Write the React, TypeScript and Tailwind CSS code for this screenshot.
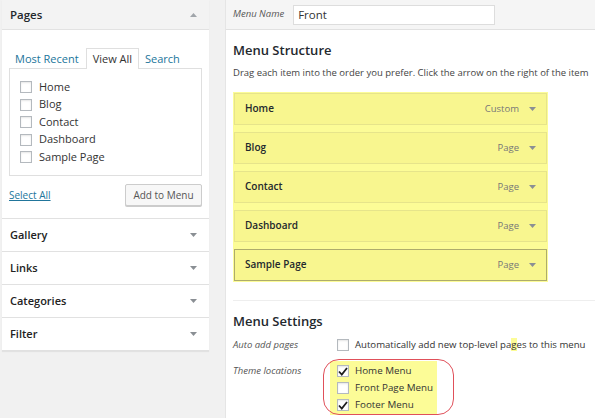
import React from "react";

const font = { fontFamily: '"Open Sans", "Liberation Sans", sans-serif' };

function Tri({ up = false, cls = "" }: { up?: boolean; cls?: string }) {
  return (
    <svg width="7" height="4" viewBox="0 0 7 4" className={cls}>
      {up ? <path d="M0 4 L3.5 0 L7 4 Z" fill="#a0a5aa" /> : <path d="M0 0 L7 0 L3.5 4 Z" fill="#8a8f94" />}
    </svg>
  );
}

function Box({ checked = false }: { checked?: boolean }) {
  return (
    <div className="w-[12px] h-[12px] border border-[#b4b9be] bg-white shadow-[inset_0_1px_2px_rgba(0,0,0,0.1)] flex items-center justify-center shrink-0">
      {checked && (
        <svg width="10" height="9" viewBox="0 0 10 9">
          <path d="M1 4.5 L3.8 7.5 L9 1" stroke="#1e1e1e" strokeWidth="1.8" fill="none" />
        </svg>
      )}
    </div>
  );
}

function Section({ label }: { label: string }) {
  return (
    <div className="h-[33px] border-b border-[#e1e1e1] flex items-center justify-between pl-[8px] pr-[12px]">
      <span className="text-[11px] font-semibold text-[#222]">{label}</span>
      <Tri />
    </div>
  );
}

function Item({ label, type, dark = false }: { label: string; type: string; dark?: boolean }) {
  return (
    <div className={`h-[32px] border ${dark ? "border-[#aeac6c]" : "border-[#e6e48b]"} bg-[#f8f68f] flex items-center justify-between pl-[10px] pr-[10px]`}>
      <span className="text-[10px] font-semibold text-[#23282d]">{label}</span>
      <div className="flex items-center gap-[10px]">
        <span className="text-[9.5px] text-[#777]">{type}</span>
        <Tri />
      </div>
    </div>
  );
}

export default function App() {
  const pages = ["Home", "Blog", "Contact", "Dashboard", "Sample Page"];
  return (
    <div style={font} className="w-[595px] h-[418px] bg-[#f1f1f1] flex overflow-hidden text-[#333]">
      {/* Left column */}
      <div className="ml-[2px] w-[207px] shrink-0 self-start bg-white shadow-[0_1px_1px_rgba(0,0,0,0.06)]">
        <div className="h-[30px] bg-[#f3f3f3] border-b border-[#e2e2e2] flex items-center justify-between pl-[8px] pr-[12px]">
          <span className="text-[11.5px] font-semibold text-[#23282d]">Pages</span>
          <Tri up />
        </div>
        <div className="pt-[18px] px-[7px] pb-[12px] border-b border-[#e1e1e1]">
          <div className="flex items-end text-[11px] h-[20px]">
            <span className="ml-[6px] text-[#21759b] mb-[1px]">Most Recent</span>
            <span className="ml-[7px] px-[6px] h-[21px] flex items-center border border-b-0 border-[#dfdfdf] bg-white relative top-[1px] text-[#333]">View All</span>
            <span className="ml-[6px] text-[#21759b] mb-[1px]">Search</span>
          </div>
          <div className="h-[108px] border border-[#dfdfdf] bg-white pt-[12px] pl-[10px] flex flex-col gap-[5.5px]">
            {pages.map((p) => (
              <div key={p} className="flex items-center gap-[7px] h-[12px]">
                <Box />
                <span className="text-[11px] text-[#333]">{p}</span>
              </div>
            ))}
          </div>
          <div className="flex items-center justify-between mt-[8px]">
            <span className="text-[10px] text-[#21759b] underline">Select All</span>
            <div className="w-[77px] h-[22px] border border-[#ccc] rounded-[2px] bg-[#f7f7f7] shadow-[0_1px_0_#ccc] flex items-center justify-center text-[10px] text-[#555]">Add to Menu</div>
          </div>
        </div>
        <Section label="Gallery" />
        <Section label="Links" />
        <Section label="Categories" />
        <Section label="Filter" />
      </div>

      {/* Right column */}
      <div className="ml-[16px] flex-1 min-w-0 bg-white border-l border-[#e5e5e5] flex flex-col overflow-hidden">
        <div className="h-[30px] bg-[#f5f5f5] border-b border-[#e1e1e1] flex items-center pl-[7px] shrink-0">
          <span className="text-[9.5px] italic text-[#555]">Menu Name</span>
          <div className="ml-[9px] w-[202px] h-[20px] border border-[#ddd] bg-white flex items-center pl-[4px] text-[11.5px] text-[#333]">Front</div>
        </div>
        <div className="pl-[7px]">
          <div className="mt-[11px] text-[13px] font-semibold text-[#23282d]">Menu Structure</div>
          <div className="mt-[5px] text-[9.5px] text-[#444] whitespace-nowrap">Drag each item into the order you prefer. Click the arrow on the right of the item</div>
          <div className="mt-[12px] w-[315px] bg-[#fcfc97] p-[1px] flex flex-col gap-[7px]">
            <Item label="Home" type="Custom" />
            <Item label="Blog" type="Page" />
            <Item label="Contact" type="Page" />
            <Item label="Dashboard" type="Page" />
            <Item label="Sample Page" type="Page" dark />
          </div>
          <div className="mt-[18px] border-t border-[#eee] pt-[11px]">
            <div className="text-[13px] font-semibold text-[#23282d]">Menu Settings</div>
            <div className="mt-[7px] flex items-center h-[14px]">
              <span className="w-[104px] text-[9.5px] italic text-[#555]">Auto add pages</span>
              <Box />
              <span className="ml-[6px] text-[9.6px] text-[#333] whitespace-nowrap">Automatically add new top-level pa<span className="bg-[#fcfc97]">g</span>es to this menu</span>
            </div>
            <div className="mt-[9px] flex items-start">
              <span className="w-[97px] pt-[3px] text-[9.5px] italic text-[#555]">Theme locations</span>
              <div className="relative">
                <div className="absolute left-[-7px] top-[-2px] w-[131px] h-[56px] border border-[#e0505a] rounded-[16px]" />
                <div className="w-[107px] bg-[#fcfc97] pl-[7px] py-[4px] flex flex-col gap-[5px]">
                  {[["Home Menu", true], ["Front Page Menu", false], ["Footer Menu", true]].map(([l, c]) => (
                    <div key={l as string} className="flex items-center gap-[6px] h-[12px]">
                      <Box checked={c as boolean} />
                      <span className="text-[9.8px] text-[#333]">{l as string}</span>
                    </div>
                  ))}
                </div>
              </div>
            </div>
          </div>
        </div>
      </div>
    </div>
  );
}
